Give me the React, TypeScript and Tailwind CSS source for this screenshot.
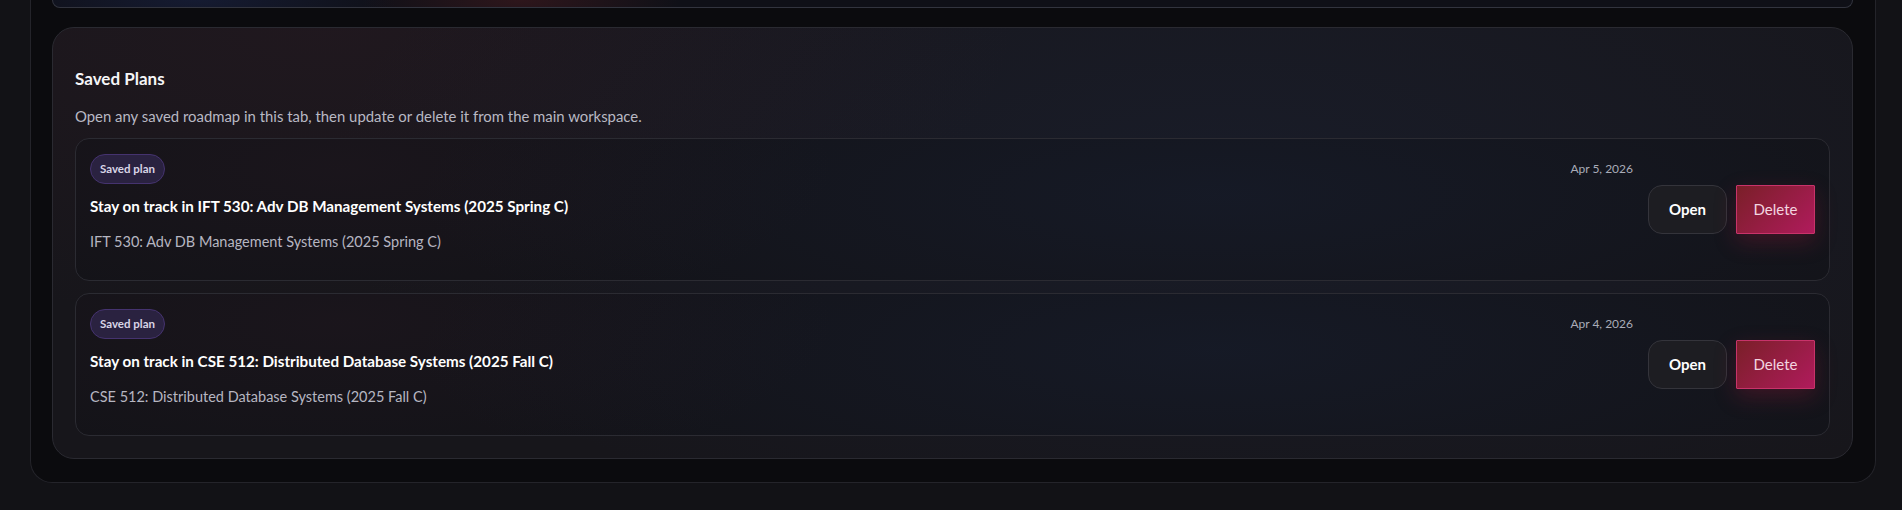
const plans = [
  {
    id: 'ift530',
    title: 'Stay on track in IFT 530: Adv DB Management Systems (2025 Spring C)',
    course: 'IFT 530: Adv DB Management Systems (2025 Spring C)',
    date: 'Apr 5, 2026',
  },
  {
    id: 'cse512',
    title: 'Stay on track in CSE 512: Distributed Database Systems (2025 Fall C)',
    course: 'CSE 512: Distributed Database Systems (2025 Fall C)',
    date: 'Apr 4, 2026',
  },
];

export default function App() {
  return (
    <div className="min-h-screen bg-[#121216] font-['Lato','Noto_Sans',sans-serif] text-white">
      {/* outer workspace shell, top is scrolled out of view */}
      <div className="ml-[30px] mr-[26px] rounded-b-[22px] border-x border-b border-[#24242a] bg-[#0b0b0e] pl-[21px] pr-[22px] pb-[23px]">
        {/* tail of the previous card */}
        <div className="h-[8px] rounded-b-[18px] border-x border-b border-[#32343e] bg-[#0f1017] bg-[radial-gradient(ellipse_200px_40px_at_8%_0%,rgba(40,60,130,0.25),transparent),radial-gradient(ellipse_160px_40px_at_26%_0%,rgba(140,40,40,0.25),transparent)]" />

        {/* Saved plans */}
        <section className="mt-[19px] rounded-[22px] border border-[#2a2a31] bg-[#17161b] bg-[radial-gradient(ellipse_700px_300px_at_15%_0%,rgba(110,40,60,0.10),transparent),radial-gradient(ellipse_900px_380px_at_65%_35%,rgba(35,60,110,0.16),transparent)] px-[22px] pt-[39px] pb-[22px]">
          <h2 className="text-[17px] font-bold leading-6 text-[#f5f5f7]">Saved Plans</h2>
          <p className="mt-[14px] text-[14.9px] leading-[22px] text-[#b9b9c4]">
            Open any saved roadmap in this tab, then update or delete it from the main workspace.
          </p>

          <div className="mt-[11px] flex flex-col gap-[12px]">
            {plans.map(p => (
              <PlanCard key={p.id} {...p} />
            ))}
          </div>
        </section>
      </div>
    </div>
  );
}

function PlanCard({ title, course, date }: { title: string; course: string; date: string }) {
  return (
    <div className="flex items-center gap-[15px] rounded-[14px] border border-[#2b2b32] bg-[#131318] bg-[radial-gradient(ellipse_800px_200px_at_65%_40%,rgba(35,60,110,0.16),transparent),radial-gradient(ellipse_500px_160px_at_15%_20%,rgba(90,40,60,0.10),transparent)] pl-[14px] pr-[14px] pt-[15px] pb-[27px]">
      <div className="flex-1">
        <div className="flex items-center justify-between">
          <span className="rounded-full border border-[#45336f] bg-[#2a2240] px-[9px] py-[7px] text-[11.5px] font-bold leading-[14px] text-[#d9d5e6]">
            Saved plan
          </span>
          <span className="text-[12px] text-[#a9acb8]">{date}</span>
        </div>
        <div className="mt-[12px] text-[15.2px] font-bold leading-5 text-white">{title}</div>
        <div className="mt-[15px] text-[14.5px] leading-[22px] text-[#b6b6c1]">{course}</div>
      </div>

      <div className="mt-[12px] flex items-center gap-[9px]">
        <button className="h-[49px] w-[79px] rounded-[14px] border border-[#34343b] bg-[#1d1d22] text-[15px] font-bold text-white">
          Open
        </button>
        <button className="h-[49px] w-[79px] rounded-[1px] border border-[#c8336a] bg-[linear-gradient(135deg,#7a1f28,#b01b5c)] text-[15px] text-[#f3d6e0] shadow-[0_8px_22px_rgba(170,25,60,0.28)]">
          Delete
        </button>
      </div>
    </div>
  );
}
